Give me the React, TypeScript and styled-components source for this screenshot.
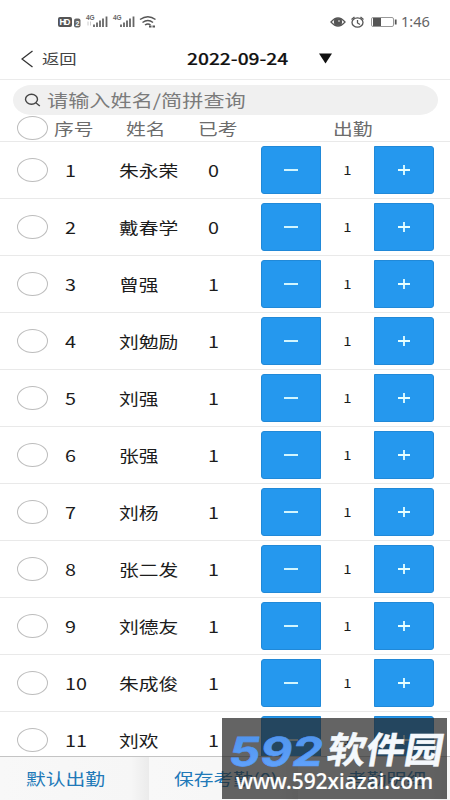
import React from 'react';
import styled, { createGlobalStyle } from 'styled-components';

const Global = createGlobalStyle`
  * { box-sizing: border-box; }
  body {
    margin: 0;
    background: #fff;
    font-family: "Noto Sans CJK SC", "Noto Sans", sans-serif;
    overflow: hidden;
  }
`;

const Screen = styled.div`
  position: relative;
  width: 450px;
  height: 800px;
  display: flex;
  flex-direction: column;
  overflow: hidden;
  background: #fff;
`;

const Wide = styled.span<{ $size?: number; $origin?: string; $ratio?: number }>`
  display: inline-block;
  font-size: ${p => p.$size ?? 16}px;
  line-height: 24px;
  white-space: nowrap;
  transform: scaleX(${p => p.$ratio ?? 1.235});
  transform-origin: ${p => p.$origin ?? 'left'} center;
`;

const StatusBar = styled.div`
  height: 38px;
  flex: none;
  display: flex;
  justify-content: space-between;
  padding-top: 10px;
  color: #555;
`;

const StatusIcons = styled.svg`
  display: block;
  flex: none;
`;

const Clock = styled.div`
  flex: none;
  width: 49px;
  height: 24px;
  color: #666;
  font-family: "Noto Sans", sans-serif;
`;

const Spacer = styled.div`
  flex: 1;
`;

const NavBar = styled.div`
  height: 42px;
  flex: none;
  display: flex;
  align-items: center;
  border-bottom: 1px solid #ebebeb;
  padding-left: 21px;
  color: #222;
`;

const BackLabel = styled.div`
  width: 153px;
  padding: 0 0 3px 8px;
  color: #444;
`;

const DateLabel = styled.div`
  width: 132px;
  padding-bottom: 2px;
  font-weight: 500;
  color: #111;
  -webkit-text-stroke: 0.2px #111;
`;

const SearchBox = styled.div`
  height: 30px;
  flex: none;
  margin: 5px 12px 0 13px;
  border-radius: 18px / 15px;
  background: #f0f0f0;
  display: flex;
  align-items: center;
  padding-left: 11px;
  color: #7b7b7b;
`;

const SearchText = styled.div`
  padding: 0 0 1px 6px;
`;

const Line = styled.div<{ $head?: boolean }>`
  height: ${p => (p.$head ? 27 : 57)}px;
  flex: none;
  display: flex;
  align-items: center;
  border-bottom: 1px solid #e9e9e9;
  padding-left: 17px;
  color: ${p => (p.$head ? '#6c6c6c' : '#1c1c1c')};
`;

const Radio = styled.div`
  width: 31px;
  height: 24px;
  border: 1px solid #bdbdbd;
  border-radius: 50%;
  flex: none;
`;

const Cell = styled.div<{ $w: number; $pad?: number }>`
  width: ${p => p.$w}px;
  padding-left: ${p => p.$pad ?? 0}px;
  flex: none;
`;

const Stepper = styled.div`
  display: flex;
  width: 173px;
  height: 48px;
  flex: none;
`;

const StepButton = styled.div<{ $right?: boolean }>`
  width: 60px;
  height: 48px;
  background: #2598ee;
  border: 1px solid #2189d8;
  border-radius: ${p => (p.$right ? '0 3px 3px 0' : '3px 0 0 3px')};
  display: flex;
  align-items: center;
  justify-content: center;
`;

const StepValue = styled.div`
  flex: 1;
  display: flex;
  align-items: center;
  justify-content: center;
`;

const List = styled.div`
  height: 614px;
  flex: none;
  overflow: hidden;
`;

const Footer = styled.div`
  height: 45px;
  flex: none;
  display: flex;
  border-top: 1px solid #c4c4c4;
  background: #f6f6f6;
  color: #2179b8;
`;

const FooterTab = styled.div<{ $pad: number }>`
  width: 149px;
  flex: none;
  padding: 9px 0 0 ${p => p.$pad}px;
  background: linear-gradient(90deg, #f8f8f8 0, #f6f6f6 88%, #ebebeb 100%);
`;

const Watermark = styled.div`
  position: absolute;
  left: 222px;
  top: 718px;
  width: 225px;
  height: 81px;
  background: rgba(36, 36, 36, 0.71);
`;

const people: [string, number][] = [
  ['朱永荣', 0], ['戴春学', 0], ['曾强', 1], ['刘勉励', 1], ['刘强', 1], ['张强', 1],
  ['刘杨', 1], ['张二发', 1], ['刘德友', 1], ['朱成俊', 1], ['刘欢', 1],
];

const SignalBars = ({ x }: { x: number }) => (
  <g transform={`translate(${x} 0)`}>
    <text x="0" y="9.5" fontSize="6.5" fontWeight="700" fontFamily="Liberation Sans" fill="#666">4G</text>
    <path d="M8 14.500v2.500M11 12.500v4.500M14 10.500v6.500M17 8.500v8.500M20.500 6.500v10.500" stroke="#666" strokeWidth="1.800" />
  </g>
);

export default function App() {
  return (
    <>
      <Global />
      <Screen>
        <StatusBar>
          <StatusIcons width="170" height="24" viewBox="0 0 170 24">
            <rect x="58" y="7" width="14" height="10" rx="2" fill="#555" />
            <text x="59.5" y="15" fontSize="8.5" fontWeight="700" fontFamily="Liberation Sans" fill="#fff" textLength="11">HD</text>
            <rect x="74" y="8.5" width="6.5" height="9" rx="2" fill="#666" />
            <text x="75.4" y="15.7" fontSize="7" fontWeight="700" fontFamily="Liberation Sans" fill="#fff">2</text>
            <SignalBars x={86} />
            <path d="M88 11.5v4M90.5 11.5v4" stroke="#ccc" />
            <SignalBars x={113} />
            <g fill="none" stroke="#555" strokeWidth="1.5">
              <path d="M140 9.5q8-5.5 15.500 0M142.500 12.500q5.500-4 10.500 0M145 15q3-2.200 5.500 0" />
              <path d="M149 16.500h6" strokeWidth="2.200" strokeDasharray="2.500 1" />
            </g>
          </StatusIcons>
          <Spacer />
          <StatusIcons width="71" height="24" viewBox="0 0 71 24">
            <g fill="none" stroke="#555" strokeWidth="1.3">
              <path d="M1 12Q8 4 15 12Q8 20 1 12Z" />
              <ellipse cx="8" cy="12" rx="3.500" ry="3" fill="#555" />
              <circle cx="9" cy="11" r=".8" fill="#fff" stroke="none" />
              <ellipse cx="27.500" cy="12.500" rx="5.500" ry="4.700" />
              <path d="M27.500 10v3l2.500 1.500M21.500 9.500l3-2.500M33.500 9.500l-3-2.500" />
              <rect x="41.500" y="7.500" width="22" height="9" rx="1.500" stroke="#999" strokeWidth="1" />
              <rect x="43" y="8" width="8" height="8" fill="#555" stroke="none" />
              <path d="M65.700 9.500v5" strokeWidth="1.800" />
            </g>
          </StatusIcons>
          <Clock><Wide $size={13.5} $ratio={1.08}>1:46</Wide></Clock>
        </StatusBar>
        <NavBar>
          <svg width="13" height="18" viewBox="0 0 13 18" fill="none" stroke="#333" strokeWidth="1.3">
            <path d="M11.500 1L1 9l10.500 8" />
          </svg>
          <BackLabel><Wide $size={14}>返回</Wide></BackLabel>
          <DateLabel><Wide $size={16} $ratio={1.2}>2022-09-24</Wide></DateLabel>
          <svg width="13" height="11" viewBox="0 0 13 11"><path d="M0 0.500h13L6.500 10.500z" fill="#111" /></svg>
        </NavBar>
        <SearchBox>
          <svg width="17" height="14" viewBox="0 0 17 14" fill="none" stroke="#444" strokeWidth="1.400">
            <ellipse cx="7.500" cy="6.200" rx="6" ry="5" /><path d="M11.800 9.800l4 3.200" />
          </svg>
          <SearchText><Wide $size={17} $ratio={1.245}>请输入姓名/简拼查询</Wide></SearchText>
        </SearchBox>
        <Line $head>
          <Radio />
          <Cell $w={78} $pad={6}><Wide>序号</Wide></Cell>
          <Cell $w={72}><Wide>姓名</Wide></Cell>
          <Cell $w={135}><Wide>已考</Wide></Cell>
          <Cell $w={50}><Wide>出勤</Wide></Cell>
        </Line>
        <List>
          {people.map(([name, count], i) => (
            <Line key={name}>
              <Radio />
              <Cell $w={71} $pad={17}><Wide>{i + 1}</Wide></Cell>
              <Cell $w={89}><Wide>{name}</Wide></Cell>
              <Cell $w={53}><Wide>{count}</Wide></Cell>
              <Stepper>
                <StepButton>
                  <svg width="14" height="12"><path d="M0 6h14" stroke="#e6ffff" strokeWidth="1.800" /></svg>
                </StepButton>
                <StepValue><Wide $size={12} $origin="center">1</Wide></StepValue>
                <StepButton $right>
                  <svg width="12" height="12"><path d="M0 6h12M6 1v10" stroke="#e6ffff" strokeWidth="1.800" /></svg>
                </StepButton>
              </Stepper>
            </Line>
          ))}
        </List>
        <Footer>
          <FooterTab $pad={26}><Wide>默认出勤</Wide></FooterTab>
          <FooterTab $pad={25}><Wide>保存考勤(0)</Wide></FooterTab>
          <FooterTab $pad={49}><Wide>考勤明细</Wide></FooterTab>
        </Footer>
        <Watermark>
          <svg width="225" height="81" viewBox="0 0 225 81">
            <defs>
              <linearGradient id="brand" x1="0" y1="0" x2="0" y2="1">
                <stop offset="0" stopColor="#4b91e8" /><stop offset="1" stopColor="#65a5ff" />
              </linearGradient>
            </defs>
            <g transform="translate(5 48) skewX(-10)">
              <text x="0" y="-0.5" fontSize="40" fontWeight="700" fontFamily="Inter" fill="url(#brand)" stroke="#5298f5" strokeWidth=".6" textLength="94" lengthAdjust="spacingAndGlyphs">592</text>
              <text x="98" y="-3" fontSize="36" fontWeight="700" fontFamily="Noto Sans CJK SC" fill="#f4f8fc" stroke="#f4f8fc" strokeWidth=".5" textLength="116" lengthAdjust="spacingAndGlyphs">软件园</text>
            </g>
            <text x="14" y="71" fontSize="21" fontWeight="500" fontFamily="Noto Sans" fill="#fff" stroke="#fff" strokeWidth=".2" textLength="197" lengthAdjust="spacingAndGlyphs">www.592xiazai.com</text>
          </svg>
        </Watermark>
      </Screen>
    </>
  );
}
